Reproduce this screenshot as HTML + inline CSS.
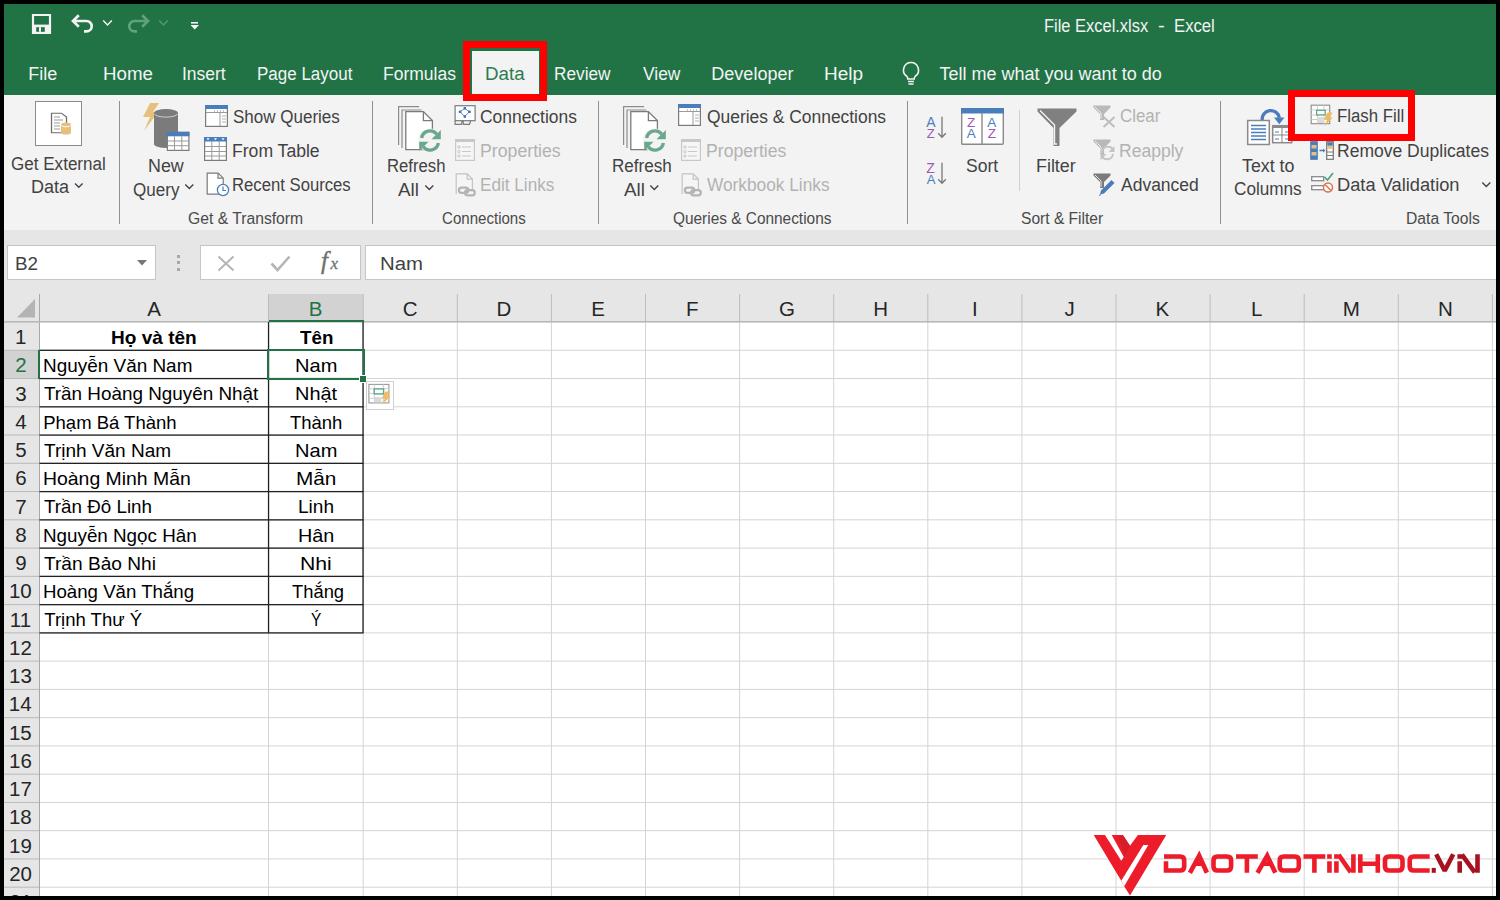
<!DOCTYPE html>
<html><head><meta charset="utf-8"><title>Excel</title>
<style>
html,body{margin:0;padding:0;}
body{width:1500px;height:900px;background:#000;position:relative;overflow:hidden;font-family:"Liberation Sans",sans-serif;}
.t{position:absolute;white-space:nowrap;transform-origin:0 0;}
.r{position:absolute;}
svg.r{overflow:visible;}
</style></head><body>
<div class="r" style="left:4px;top:4px;width:1492px;height:91px;background:#217346"></div>
<svg class="r" style="left:31px;top:13px" width="21" height="21" viewBox="0 0 21 21"><path d="M2 2h17v18H2z" fill="none" stroke="#f3f3f3" stroke-width="2.2"/><path d="M1 1.6h19" stroke="#f3f3f3" stroke-width="1.2"/><rect x="1" y="11.6" width="19" height="9.4" fill="#f3f3f3"/><rect x="5.2" y="14.2" width="8.6" height="4.6" fill="#217346"/><rect x="8" y="14.2" width="2" height="4.6" fill="#f3f3f3"/></svg>
<svg class="r" style="left:66px;top:10px" width="30" height="26" viewBox="0 0 30 26"><path d="M7.5 11H20.5a5.2 5.2 0 0 1 0 10.4H18" fill="none" stroke="#f3f3f3" stroke-width="2.7"/><path d="M12.8 5.3L7 11L12.8 16.7" fill="none" stroke="#f3f3f3" stroke-width="2.7"/></svg>
<svg class="r" style="left:102px;top:19px" width="11" height="8" viewBox="0 0 11 8"><path d="M1.2 1.5L5.5 6L9.8 1.5" fill="none" stroke="#f3f3f3" stroke-width="1.5"/></svg>
<svg class="r" style="left:122px;top:10px" width="30" height="26" viewBox="0 0 30 26"><path d="M28-0.5" fill="none"/><path d="M25.5 11H12.5a5.2 5.2 0 0 0 0 10.4H15" fill="none" stroke="#5fa27c" stroke-width="2.7"/><path d="M20.2 5.3L26 11L20.2 16.7" fill="none" stroke="#5fa27c" stroke-width="2.7"/></svg>
<svg class="r" style="left:158px;top:19px" width="11" height="8" viewBox="0 0 11 8"><path d="M1.2 1.5L5.5 6L9.8 1.5" fill="none" stroke="#4e9a70" stroke-width="1.5"/></svg>
<svg class="r" style="left:190px;top:21px" width="10" height="10" viewBox="0 0 10 10"><rect x="1" y="1" width="7" height="1.6" fill="#f3f3f3"/><path d="M0.5 4h8.5L4.75 8.5z" fill="#f3f3f3"/></svg>
<div class="t" style="left:1044.38px;top:17.00px;font-size:18px;line-height:18px;color:#f3f3f3;transform:scaleX(0.9136);">File Excel.xlsx</div>
<div class="t" style="left:1158.08px;top:17.00px;font-size:18px;line-height:18px;color:#f3f3f3;transform:scaleX(1.1338);">-</div>
<div class="t" style="left:1173.96px;top:17.00px;font-size:18px;line-height:18px;color:#f3f3f3;transform:scaleX(0.9275);">Excel</div>
<div class="r" style="left:471.5px;top:50.8px;width:67.7px;height:44.5px;background:#f3f3f3"></div>
<div class="t" style="left:28.16px;top:65.00px;font-size:18px;line-height:18px;color:#f3f3f3;">File</div>
<div class="t" style="left:102.50px;top:65.00px;font-size:18px;line-height:18px;color:#f3f3f3;transform:scaleX(1.0411);">Home</div>
<div class="t" style="left:182.43px;top:65.00px;font-size:18px;line-height:18px;color:#f3f3f3;transform:scaleX(0.9702);">Insert</div>
<div class="t" style="left:256.64px;top:65.00px;font-size:18px;line-height:18px;color:#f3f3f3;transform:scaleX(0.9443);">Page Layout</div>
<div class="t" style="left:382.60px;top:65.00px;font-size:18px;line-height:18px;color:#f3f3f3;transform:scaleX(0.9727);">Formulas</div>
<div class="t" style="left:554.12px;top:65.00px;font-size:18px;line-height:18px;color:#f3f3f3;transform:scaleX(0.9583);">Review</div>
<div class="t" style="left:642.61px;top:65.00px;font-size:18px;line-height:18px;color:#f3f3f3;transform:scaleX(0.9661);">View</div>
<div class="t" style="left:711.37px;top:65.00px;font-size:18px;line-height:18px;color:#f3f3f3;">Developer</div>
<div class="t" style="left:823.78px;top:65.00px;font-size:18px;line-height:18px;color:#f3f3f3;transform:scaleX(1.0537);">Help</div>
<div class="t" style="left:939.55px;top:65.00px;font-size:18px;line-height:18px;color:#f3f3f3;">Tell me what you want to do</div>
<div class="t" style="left:484.50px;top:65.00px;font-size:18px;line-height:18px;color:#2b7b50;transform:scaleX(1.0400);">Data</div>
<svg class="r" style="left:900px;top:61px" width="22" height="25" viewBox="0 0 22 25"><path d="M11 1.5a7.5 7.5 0 0 0-4.5 13.5c1 .9 1.3 1.8 1.3 3h6.4c0-1.2.3-2.1 1.3-3A7.5 7.5 0 0 0 11 1.5z" fill="none" stroke="#f3f3f3" stroke-width="1.6"/><path d="M8 20.5h6M8.5 23h5" stroke="#f3f3f3" stroke-width="1.5"/></svg>
<div class="r" style="left:4px;top:95px;width:1492px;height:135px;background:#f3f3f3"></div>
<div class="r" style="left:4px;top:229.6px;width:1492px;height:1.2px;background:#d2d2d2"></div>
<div class="r" style="left:119px;top:101px;width:1px;height:123px;background:#909090"></div>
<div class="r" style="left:372px;top:101px;width:1px;height:123px;background:#909090"></div>
<div class="r" style="left:598px;top:101px;width:1px;height:123px;background:#909090"></div>
<div class="r" style="left:906.5px;top:101px;width:1px;height:123px;background:#909090"></div>
<div class="r" style="left:1219.5px;top:101px;width:1px;height:123px;background:#909090"></div>
<div class="r" style="left:1019px;top:110px;width:1px;height:81px;background:#d0d0d0"></div>
<div class="t" style="left:188.02px;top:211.00px;font-size:16px;line-height:16px;color:#4a4a4a;transform:scaleX(0.9808);">Get & Transform</div>
<div class="t" style="left:442.25px;top:211.00px;font-size:16px;line-height:16px;color:#4a4a4a;transform:scaleX(0.9418);">Connections</div>
<div class="t" style="left:672.51px;top:211.00px;font-size:16px;line-height:16px;color:#4a4a4a;transform:scaleX(0.9628);">Queries & Connections</div>
<div class="t" style="left:1021.30px;top:211.00px;font-size:16px;line-height:16px;color:#4a4a4a;transform:scaleX(0.9732);">Sort & Filter</div>
<div class="t" style="left:1406.45px;top:211.00px;font-size:16px;line-height:16px;color:#4a4a4a;transform:scaleX(0.9790);">Data Tools</div>
<div class="r" style="left:35px;top:101px;width:47px;height:45px;background:#fff;border:1px solid #8a8a8a;box-sizing:border-box"></div>
<svg class="r" style="left:50px;top:112px" width="22" height="24" viewBox="0 0 22 24"><path d="M1.5 1.5h10l5 5v20h-15z" fill="#fff" stroke="#6e6e6e" stroke-width="1.3" transform="translate(0,0) scale(1,0.78)"/><path d="M4 5h6M4 8h9M4 11h6M4 14h6M4 17h6" stroke="#bdbdbd" stroke-width="1.3"/><path d="M11 12.5a5 2 0 0 1 10 0v8a5 2 0 0 1-10 0z" fill="#e8c07e"/><path d="M11.3 13.2a4.7 1.6 0 0 0 9.4 0" stroke="#fff" stroke-width="0.9" fill="none"/></svg>
<div class="t" style="left:11.15px;top:155.00px;font-size:18px;line-height:18px;color:#424242;transform:scaleX(0.9477);">Get External</div>
<div class="t" style="left:31.06px;top:178.00px;font-size:18px;line-height:18px;color:#424242;">Data</div>
<svg class="r" style="left:74px;top:182.3px" width="10" height="7" viewBox="0 0 10 7"><path d="M1 1.5L4.8 5.3L8.6 1.5" fill="none" stroke="#444" stroke-width="1.4"/></svg>
<svg class="r" style="left:141px;top:102px" width="50" height="50" viewBox="0 0 50 50"><path d="M9 1h9l-6 9h5L3 29l6-14H2z" fill="#e8c07e"/><path d="M13 11a12 4 0 0 1 24 0v31a12 4 0 0 1-24 0z" fill="#7b7b7b"/><path d="M13.6 11.8a11.4 3.3 0 0 0 22.8 0" stroke="#d0d0d0" stroke-width="1" fill="none"/><rect x="26.4" y="30.4" width="21.5" height="18" fill="#fff" stroke="#7b7b7b" stroke-width="1.2"/><rect x="25.8" y="29.8" width="22.7" height="4.5" fill="#4a7ebb"/><path d="M33.5 34.3v14M40.8 34.3v14M26.4 39h21.5M26.4 43.7h21.5" stroke="#9a9a9a" stroke-width="1"/></svg>
<div class="t" style="left:147.57px;top:157.00px;font-size:18px;line-height:18px;color:#424242;transform:scaleX(0.9928);">New</div>
<div class="t" style="left:133.23px;top:181.00px;font-size:18px;line-height:18px;color:#424242;transform:scaleX(0.9470);">Query</div>
<svg class="r" style="left:184px;top:183px" width="11" height="8" viewBox="0 0 11 8"><path d="M1.3 1.5L5.3 5.5L9.3 1.5" fill="none" stroke="#444" stroke-width="1.4"/></svg>
<svg class="r" style="left:204.5px;top:104.8px" width="23" height="22" viewBox="0 0 23 22"><rect x="0.6" y="0.6" width="21.8" height="20.8" fill="#fff" stroke="#7b7b7b" stroke-width="1.2"/><rect x="0" y="0" width="23" height="4" fill="#4a7ebb"/><path d="M1 7.5h21" stroke="#9a9a9a" stroke-width="1"/><path d="M15 8v13" stroke="#9a9a9a"/><path d="M17 11h4M17 14h4M17 17h4" stroke="#b0b0b0"/><path d="M9 6h1M12 6h1M15 6h1M18 6h1" stroke="#888"/></svg>
<svg class="r" style="left:204px;top:137px" width="23" height="24" viewBox="0 0 23 24"><rect x="0.6" y="0.6" width="21.8" height="22.8" fill="#fff" stroke="#7b7b7b" stroke-width="1.2"/><rect x="0" y="0" width="23" height="4.5" fill="#4a7ebb"/><path d="M7.8 4v19M15.2 4v19M1 9.5h21M1 14.5h21M1 19h21" stroke="#9a9a9a" stroke-width="1"/><path d="M2.5 1.3h3l-1.5 2zM10 1.3h3l-1.5 2zM17.5 1.3h3l-1.5 2z" fill="#fff"/></svg>
<svg class="r" style="left:206px;top:172px" width="24" height="25" viewBox="0 0 24 25"><path d="M1.2 1.2h11l5 5v16h-16z" fill="#fff" stroke="#7b7b7b" stroke-width="1.2"/><path d="M12 1.2v5h5" fill="none" stroke="#7b7b7b" stroke-width="1.2"/><circle cx="17" cy="18" r="5.6" fill="#fff" stroke="#4a7ebb" stroke-width="1.3"/><path d="M17 14.5v4h3" fill="none" stroke="#4a7ebb" stroke-width="1.2"/></svg>
<div class="t" style="left:232.54px;top:108.00px;font-size:18px;line-height:18px;color:#424242;transform:scaleX(0.9444);">Show Queries</div>
<div class="t" style="left:231.89px;top:142.00px;font-size:18px;line-height:18px;color:#424242;transform:scaleX(0.9772);">From Table</div>
<div class="t" style="left:231.97px;top:176.00px;font-size:18px;line-height:18px;color:#424242;transform:scaleX(0.9270);">Recent Sources</div>
<svg class="r" style="left:397px;top:104px" width="47" height="48" viewBox="0 0 47 48"><path d="M1.6 41V2.6h20.5M5 44V6h19.5" fill="none" stroke="#8c8c8c" stroke-width="1.2"/><path d="M8.8 7.6h17.6l9 9v29h-26.6z" fill="#fff" stroke="#7b7b7b" stroke-width="1.3"/><path d="M26.4 7.6v9h9" fill="none" stroke="#7b7b7b" stroke-width="1.3"/><circle cx="33" cy="36.5" r="12" fill="#f3f3f3"/><path d="M24.6 34a8.6 8.6 0 0 1 15.2-3.8" fill="none" stroke="#6aa88e" stroke-width="3.4"/><path d="M43.8 26v9.3h-9.3z" fill="#6aa88e"/><path d="M41.4 39a8.6 8.6 0 0 1-15.2 3.8" fill="none" stroke="#6aa88e" stroke-width="3.4"/><path d="M22.2 47v-9.3h9.3z" fill="#6aa88e"/></svg>
<div class="t" style="left:386.86px;top:157.00px;font-size:18px;line-height:18px;color:#424242;transform:scaleX(0.9273);">Refresh</div>
<div class="t" style="left:398.31px;top:181.00px;font-size:18px;line-height:18px;color:#424242;transform:scaleX(1.0470);">All</div>
<svg class="r" style="left:424px;top:184px" width="11" height="8" viewBox="0 0 11 8"><path d="M1.3 1.5L5.3 5.5L9.3 1.5" fill="none" stroke="#444" stroke-width="1.4"/></svg>
<svg class="r" style="left:622px;top:104px" width="47" height="48" viewBox="0 0 47 48"><path d="M1.6 41V2.6h20.5M5 44V6h19.5" fill="none" stroke="#8c8c8c" stroke-width="1.2"/><path d="M8.8 7.6h17.6l9 9v29h-26.6z" fill="#fff" stroke="#7b7b7b" stroke-width="1.3"/><path d="M26.4 7.6v9h9" fill="none" stroke="#7b7b7b" stroke-width="1.3"/><circle cx="33" cy="36.5" r="12" fill="#f3f3f3"/><path d="M24.6 34a8.6 8.6 0 0 1 15.2-3.8" fill="none" stroke="#6aa88e" stroke-width="3.4"/><path d="M43.8 26v9.3h-9.3z" fill="#6aa88e"/><path d="M41.4 39a8.6 8.6 0 0 1-15.2 3.8" fill="none" stroke="#6aa88e" stroke-width="3.4"/><path d="M22.2 47v-9.3h9.3z" fill="#6aa88e"/></svg>
<div class="t" style="left:611.63px;top:157.00px;font-size:18px;line-height:18px;color:#424242;transform:scaleX(0.9488);">Refresh</div>
<div class="t" style="left:623.61px;top:181.00px;font-size:18px;line-height:18px;color:#424242;transform:scaleX(1.0470);">All</div>
<svg class="r" style="left:649px;top:184px" width="11" height="8" viewBox="0 0 11 8"><path d="M1.3 1.5L5.3 5.5L9.3 1.5" fill="none" stroke="#444" stroke-width="1.4"/></svg>
<svg class="r" style="left:454px;top:104px" width="22" height="22" viewBox="0 0 22 22"><rect x="1.1" y="1.7" width="20" height="15" fill="#fff" stroke="#7b7b7b" stroke-width="1.2"/><path d="M1.1 16.7v3.6h6.2l1-3.6M9.2 16.7v3.6h6.3l1.2-3.6" fill="none" stroke="#7b7b7b" stroke-width="1.2"/><path d="M10.8 4.3L15.3 7.8L10.8 12.5L6 7.8z" fill="none" stroke="#4a7ebb" stroke-width="0.9"/><circle cx="10.8" cy="8" r="1.6" fill="#fff"/><rect x="9.6" y="3" width="2.4" height="2.6" fill="#3f73b4"/><rect x="4.8" y="6.6" width="2.6" height="2.4" fill="#3f73b4"/><rect x="14.1" y="6.6" width="2.6" height="2.4" fill="#3f73b4"/><rect x="9.6" y="11.2" width="2.4" height="2.6" fill="#3f73b4"/></svg>
<svg class="r" style="left:455px;top:139px" width="20" height="22" viewBox="0 0 20 22"><rect x="0.6" y="0.6" width="18.8" height="20.8" fill="#f6f6f6" stroke="#c8c8c8" stroke-width="1.2"/><rect x="0" y="0" width="20" height="3" fill="#c8c8c8"/><path d="M7 8h9M7 12.5h9M7 17h9" stroke="#c8c8c8" stroke-width="1.2"/><circle cx="4" cy="8" r="1.2" fill="none" stroke="#c8c8c8"/><circle cx="4" cy="12.5" r="1.2" fill="none" stroke="#c8c8c8"/><circle cx="4" cy="17" r="1.2" fill="none" stroke="#c8c8c8"/></svg>
<svg class="r" style="left:455px;top:173px" width="23" height="24" viewBox="0 0 23 24"><path d="M1.2 21V0.9h11l5.2 5.2V17" fill="#f6f4f6" stroke="#c4c4c4" stroke-width="1.2"/><path d="M12.2 0.9v5.2h5.2" fill="none" stroke="#c4c4c4" stroke-width="1.2"/><path d="M6.5 14.6h4.2a2.6 2.6 0 0 1 0 5.2H6.5a2.6 2.6 0 0 1 0-5.2zM12.6 17.2h4.6a2.6 2.6 0 0 1 0 5.2h-4.6a2.6 2.6 0 0 1 0-5.2z" fill="none" stroke="#b4b4b4" stroke-width="2.2"/></svg>
<div class="t" style="left:480.43px;top:108.00px;font-size:18px;line-height:18px;color:#424242;transform:scaleX(0.9680);">Connections</div>
<div class="t" style="left:479.88px;top:142.00px;font-size:18px;line-height:18px;color:#b2b2b2;transform:scaleX(0.9836);">Properties</div>
<div class="t" style="left:479.93px;top:176.00px;font-size:18px;line-height:18px;color:#b2b2b2;transform:scaleX(0.9531);">Edit Links</div>
<svg class="r" style="left:678px;top:104px" width="23" height="22" viewBox="0 0 23 22"><rect x="0.6" y="0.6" width="21.8" height="20.8" fill="#fff" stroke="#7b7b7b" stroke-width="1.2"/><rect x="0" y="0" width="23" height="4" fill="#4a7ebb"/><path d="M1 7.5h21" stroke="#9a9a9a" stroke-width="1"/><path d="M15 8v13" stroke="#9a9a9a"/><path d="M17 11h4M17 14h4M17 17h4" stroke="#b0b0b0"/><path d="M9 6h1M12 6h1M15 6h1M18 6h1" stroke="#888"/></svg>
<svg class="r" style="left:681px;top:139px" width="20" height="22" viewBox="0 0 20 22"><rect x="0.6" y="0.6" width="18.8" height="20.8" fill="#f6f6f6" stroke="#c8c8c8" stroke-width="1.2"/><rect x="0" y="0" width="20" height="3" fill="#c8c8c8"/><path d="M7 8h9M7 12.5h9M7 17h9" stroke="#c8c8c8" stroke-width="1.2"/><circle cx="4" cy="8" r="1.2" fill="none" stroke="#c8c8c8"/><circle cx="4" cy="12.5" r="1.2" fill="none" stroke="#c8c8c8"/><circle cx="4" cy="17" r="1.2" fill="none" stroke="#c8c8c8"/></svg>
<svg class="r" style="left:681px;top:173px" width="23" height="24" viewBox="0 0 23 24"><path d="M1.2 21V0.9h11l5.2 5.2V17" fill="#f6f4f6" stroke="#c4c4c4" stroke-width="1.2"/><path d="M12.2 0.9v5.2h5.2" fill="none" stroke="#c4c4c4" stroke-width="1.2"/><path d="M6.5 14.6h4.2a2.6 2.6 0 0 1 0 5.2H6.5a2.6 2.6 0 0 1 0-5.2zM12.6 17.2h4.6a2.6 2.6 0 0 1 0 5.2h-4.6a2.6 2.6 0 0 1 0-5.2z" fill="none" stroke="#b4b4b4" stroke-width="2.2"/></svg>
<div class="t" style="left:706.72px;top:108.00px;font-size:18px;line-height:18px;color:#424242;transform:scaleX(0.9674);">Queries &amp; Connections</div>
<div class="t" style="left:706.09px;top:142.00px;font-size:18px;line-height:18px;color:#b2b2b2;transform:scaleX(0.9799);">Properties</div>
<div class="t" style="left:707.41px;top:176.00px;font-size:18px;line-height:18px;color:#b2b2b2;transform:scaleX(0.9599);">Workbook Links</div>
<svg class="r" style="left:926px;top:116px" width="22" height="23" viewBox="0 0 22 23"><text x="0.3" y="11" font-family="Liberation Sans" font-size="14" fill="#4a7ebb">A</text><text x="0.8" y="21.8" font-family="Liberation Sans" font-size="13" fill="#9b59b6">Z</text><path d="M16 0.7v20.5M12.2 17.2l3.8 4 3.8-4" fill="none" stroke="#777" stroke-width="1.3"/></svg>
<svg class="r" style="left:926px;top:162px" width="22" height="23" viewBox="0 0 22 23"><text x="0.3" y="11" font-family="Liberation Sans" font-size="14" fill="#9b59b6">Z</text><text x="0.8" y="21.8" font-family="Liberation Sans" font-size="13" fill="#4a7ebb">A</text><path d="M16 0.7v20.5M12.2 17.2l3.8 4 3.8-4" fill="none" stroke="#777" stroke-width="1.3"/></svg>
<svg class="r" style="left:961px;top:108px" width="43" height="37" viewBox="0 0 43 37"><rect x="0.7" y="0.7" width="41.6" height="35.6" rx="1" fill="#fff" stroke="#8a8a8a" stroke-width="1.4"/><rect x="0" y="0" width="43" height="5.5" fill="#4a7ebb"/><path d="M21 5v31" stroke="#8a8a8a" stroke-width="1.4"/><text x="6" y="19" font-family="Liberation Sans" font-size="13.5" fill="#9b59b6">Z</text><text x="5.8" y="29.8" font-family="Liberation Sans" font-size="13.5" fill="#4a7ebb">A</text><text x="26.3" y="19" font-family="Liberation Sans" font-size="13.5" fill="#4a7ebb">A</text><text x="26.8" y="29.8" font-family="Liberation Sans" font-size="13.5" fill="#9b59b6">Z</text></svg>
<div class="t" style="left:965.81px;top:157.00px;font-size:18px;line-height:18px;color:#424242;transform:scaleX(0.9738);">Sort</div>
<svg class="r" style="left:1037px;top:108px" width="40" height="39" viewBox="0 0 40 39"><path d="M0.5 0.5h39v3L22.5 20v18h-6V20L0.5 3.5z" fill="#808080"/><path d="M3 2.5L17.5 17v19h2.5" fill="none" stroke="#f3f3f3" stroke-width="1.4"/></svg>
<div class="t" style="left:1035.97px;top:157.00px;font-size:18px;line-height:18px;color:#424242;transform:scaleX(0.9935);">Filter</div>
<svg class="r" style="left:1092.5px;top:105px" width="18" height="15" viewBox="0 0 18 15"><path d="M0.5 0.5h17v2L11 9v6H7V9L0.5 2.5z" fill="#b9b9b9"/><path d="M2 2l6 6v6" fill="none" stroke="#f3f3f3" stroke-width="0.9"/></svg>
<svg class="r" style="left:1102px;top:116px" width="14" height="12" viewBox="0 0 14 12"><path d="M1.5 1l11 10M12.5 1l-11 10" stroke="#bdbdbd" stroke-width="2"/></svg>
<svg class="r" style="left:1092.5px;top:139px" width="18" height="15" viewBox="0 0 18 15"><path d="M0.5 0.5h17v2L11 9v6H7V9L0.5 2.5z" fill="#b9b9b9"/><path d="M2 2l6 6v6" fill="none" stroke="#f3f3f3" stroke-width="0.9"/></svg>
<svg class="r" style="left:1099px;top:144px" width="17" height="18" viewBox="0 0 17 18"><path d="M3 8a6 6 0 0 1 11-2.5" fill="none" stroke="#c4c4c4" stroke-width="2"/><path d="M15.5 2v6h-6z" fill="#c4c4c4"/><path d="M14 10a6 6 0 0 1-11 2.5" fill="none" stroke="#c4c4c4" stroke-width="2"/><path d="M1.5 16v-6h6z" fill="#c4c4c4"/></svg>
<svg class="r" style="left:1092.5px;top:173px" width="18" height="15" viewBox="0 0 18 15"><path d="M0.5 0.5h17v2L11 9v6H7V9L0.5 2.5z" fill="#7b7b7b"/><path d="M2 2l6 6v6" fill="none" stroke="#f3f3f3" stroke-width="0.9"/></svg>
<svg class="r" style="left:1098px;top:179px" width="18" height="17" viewBox="0 0 18 17"><path d="M2 15.5l1-4L13.5 1l3 3L6 14.5z" fill="#4a7ebb"/><path d="M1 16.5l2-1" stroke="#4a7ebb"/></svg>
<div class="t" style="left:1119.86px;top:107.00px;font-size:18px;line-height:18px;color:#b2b2b2;transform:scaleX(0.9363);">Clear</div>
<div class="t" style="left:1119.30px;top:142.00px;font-size:18px;line-height:18px;color:#b2b2b2;transform:scaleX(0.9747);">Reapply</div>
<div class="t" style="left:1120.61px;top:176.00px;font-size:18px;line-height:18px;color:#424242;transform:scaleX(0.9714);">Advanced</div>
<svg class="r" style="left:1246px;top:107px" width="46" height="39" viewBox="0 0 46 39"><path d="M16.3 13.5A8.6 8.6 0 0 1 33.3 10.8" fill="none" stroke="#4a7ebb" stroke-width="3.3"/><path d="M28 10.5h10.5l-5.2 6.8z" fill="#4a7ebb"/><rect x="1.7" y="13.5" width="21.6" height="24" fill="#fff" stroke="#8a8a8a" stroke-width="1.5"/><path d="M5 18.5h15M5 22h15M5 25.5h15M5 29h15M5 32.5h15" stroke="#4a7ebb" stroke-width="1.3"/><rect x="26.7" y="18.7" width="19" height="17" fill="#fff" stroke="#8a8a8a" stroke-width="1.5"/><rect x="26" y="18" width="20" height="3" fill="#8a8a8a"/><path d="M36 21v15M26 28h20" stroke="#8a8a8a" stroke-width="1.1"/><path d="M29 25h4M39 25h4M29 32h4M39 32h4" stroke="#4a7ebb" stroke-width="1.2"/></svg>
<div class="t" style="left:1241.95px;top:157.00px;font-size:18px;line-height:18px;color:#424242;transform:scaleX(0.9896);">Text to</div>
<div class="t" style="left:1234.14px;top:180.00px;font-size:18px;line-height:18px;color:#424242;transform:scaleX(0.9528);">Columns</div>
<svg class="r" style="left:1310px;top:104px" width="25" height="23" viewBox="0 0 25 23"><rect x="1.2" y="1.2" width="18.5" height="18.5" fill="#fff" stroke="#8a8a8a" stroke-width="1.1"/><path d="M1.2 6h18.5M1.2 11h18.5M1.2 15.5h18.5M7.5 1.2v18.5M14 1.2v18.5" stroke="#c8c8c8" stroke-width="0.9"/><rect x="6.6" y="6.3" width="8.6" height="4.6" fill="#fff" stroke="#5fa98a" stroke-width="1.3"/><rect x="7.5" y="13" width="6.5" height="6" fill="#dcdcdc"/><path d="M17.5 8.6h5.2l-3.2 4.8h3.4l-8.6 8.8 2.8-6.6h-3.2z" fill="#f0bb5e"/></svg>
<svg class="r" style="left:1310px;top:141px" width="24" height="19" viewBox="0 0 24 19"><rect x="0.7" y="0.7" width="6.6" height="17.6" fill="#4a7ebb" stroke="#4a7ebb"/><rect x="1.5" y="4" width="5" height="3.5" fill="#e8c07e"/><rect x="1.5" y="11" width="5" height="3.5" fill="#e8c07e"/><path d="M9.5 9.5h4" stroke="#4a7ebb" stroke-width="1.5"/><path d="M13 7.5l2.5 2-2.5 2z" fill="#4a7ebb"/><rect x="16.7" y="0.7" width="6.6" height="17.6" fill="#fff" stroke="#7b7b7b" stroke-width="1.3"/><rect x="17.3" y="1.3" width="5.4" height="3.5" fill="#4a7ebb"/><rect x="17.3" y="4.8" width="5.4" height="3" fill="#e8c07e"/><path d="M17 11h6M17 14.5h6" stroke="#7b7b7b" stroke-width="1"/></svg>
<svg class="r" style="left:1311px;top:172px" width="23" height="21" viewBox="0 0 23 21"><rect x="0.7" y="4.7" width="12" height="4" fill="#fff" stroke="#8a8a8a" stroke-width="1.3"/><rect x="0.7" y="13.7" width="12" height="4" fill="#fff" stroke="#8a8a8a" stroke-width="1.3"/><path d="M13.5 5l3 3 5.5-7" fill="none" stroke="#4aa07a" stroke-width="1.6"/><circle cx="17" cy="15.5" r="4.5" fill="#fff" stroke="#e07050" stroke-width="1.5"/><path d="M14 12.5l6 6" stroke="#e07050" stroke-width="1.4"/></svg>
<div class="t" style="left:1337.36px;top:107.00px;font-size:18px;line-height:18px;color:#424242;transform:scaleX(0.9339);">Flash Fill</div>
<div class="t" style="left:1337.30px;top:142.00px;font-size:18px;line-height:18px;color:#424242;transform:scaleX(0.9734);">Remove Duplicates</div>
<div class="t" style="left:1337.24px;top:176.00px;font-size:18px;line-height:18px;color:#424242;transform:scaleX(1.0146);">Data Validation</div>
<svg class="r" style="left:1481px;top:181px" width="11" height="8" viewBox="0 0 11 8"><path d="M1.3 1.5L5.3 5.5L9.3 1.5" fill="none" stroke="#444" stroke-width="1.4"/></svg>
<div class="r" style="left:463px;top:40.8px;width:84px;height:60.5px;border:7px solid #ff0000;box-sizing:border-box"></div>
<div class="r" style="left:1288.3px;top:90px;width:126.7px;height:50.8px;border:7px solid #ff0000;box-sizing:border-box"></div>
<div class="r" style="left:4px;top:230px;width:1492px;height:64px;background:#e6e6e6"></div>
<div class="r" style="left:7px;top:245px;width:149px;height:35px;background:#fff;border:1px solid #c6c6c6;box-sizing:border-box"></div>
<div class="t" style="left:14.50px;top:255.00px;font-size:18px;line-height:18px;color:#424242;transform:scaleX(1.0449);">B2</div>
<svg class="r" style="left:137px;top:260px" width="10" height="6" viewBox="0 0 10 6"><path d="M0 0h10L5 5.5z" fill="#777"/></svg>
<div class="r" style="left:176.5px;top:254.5px;width:3.5px;height:3px;background:#a8a8a8"></div>
<div class="r" style="left:176.5px;top:261px;width:3.5px;height:3px;background:#a8a8a8"></div>
<div class="r" style="left:176.5px;top:267.5px;width:3.5px;height:3px;background:#a8a8a8"></div>
<div class="r" style="left:200px;top:245px;width:161px;height:35px;background:#fff;border:1px solid #c6c6c6;box-sizing:border-box"></div>
<svg class="r" style="left:217px;top:255px" width="19" height="17" viewBox="0 0 19 17"><path d="M1.5 1.5l15 14M16.5 1.5l-15 14" stroke="#b5b5b5" stroke-width="2"/></svg>
<svg class="r" style="left:270px;top:255px" width="21" height="17" viewBox="0 0 21 17"><path d="M1.5 8.5l6 6.5L19.5 1.5" fill="none" stroke="#b5b5b5" stroke-width="2.6"/></svg>
<svg class="r" style="left:320px;top:249px" width="24" height="27" viewBox="0 0 24 27"><text x="1" y="20" font-family="Liberation Serif" font-style="italic" font-size="25" fill="#707070" stroke="#707070" stroke-width="0.4">f</text><text x="10.5" y="20" font-family="Liberation Serif" font-style="italic" font-size="17" fill="#707070" stroke="#707070" stroke-width="0.3">x</text></svg>
<div class="r" style="left:365px;top:245px;width:1131px;height:35px;background:#fff;border:1px solid #c6c6c6;border-right:none;box-sizing:border-box"></div>
<div class="t" style="left:380.37px;top:255.00px;font-size:18px;line-height:18px;color:#424242;transform:scaleX(1.1309);">Nam</div>
<div class="r" style="left:4px;top:294px;width:1492px;height:28px;background:#e6e6e6"></div>
<div class="r" style="left:4px;top:322px;width:36px;height:574px;background:#e6e6e6"></div>
<div class="r" style="left:40px;top:322px;width:1456px;height:574px;background:#fff"></div>
<svg class="r" style="left:17px;top:299.3px" width="18" height="18.5" viewBox="0 0 18 18.5"><path d="M18 0v18.5H0z" fill="#b4b4b4"/></svg>
<div class="r" style="left:268.5px;top:294px;width:94.5px;height:28px;background:#d2d2d2"></div>
<div class="r" style="left:4px;top:350.3px;width:36px;height:28.26px;background:#d2d2d2"></div>
<svg class="r" style="left:0px;top:0px" width="1500" height="900" viewBox="0 0 1500 900"><rect x="40" y="349.76" width="1456" height="1" fill="#d4d4d4"/><rect x="4" y="349.76" width="36" height="1" fill="#bababa"/><rect x="40" y="378.02" width="1456" height="1" fill="#d4d4d4"/><rect x="4" y="378.02" width="36" height="1" fill="#bababa"/><rect x="40" y="406.28" width="1456" height="1" fill="#d4d4d4"/><rect x="4" y="406.28" width="36" height="1" fill="#bababa"/><rect x="40" y="434.54" width="1456" height="1" fill="#d4d4d4"/><rect x="4" y="434.54" width="36" height="1" fill="#bababa"/><rect x="40" y="462.80" width="1456" height="1" fill="#d4d4d4"/><rect x="4" y="462.80" width="36" height="1" fill="#bababa"/><rect x="40" y="491.06" width="1456" height="1" fill="#d4d4d4"/><rect x="4" y="491.06" width="36" height="1" fill="#bababa"/><rect x="40" y="519.32" width="1456" height="1" fill="#d4d4d4"/><rect x="4" y="519.32" width="36" height="1" fill="#bababa"/><rect x="40" y="547.58" width="1456" height="1" fill="#d4d4d4"/><rect x="4" y="547.58" width="36" height="1" fill="#bababa"/><rect x="40" y="575.84" width="1456" height="1" fill="#d4d4d4"/><rect x="4" y="575.84" width="36" height="1" fill="#bababa"/><rect x="40" y="604.10" width="1456" height="1" fill="#d4d4d4"/><rect x="4" y="604.10" width="36" height="1" fill="#bababa"/><rect x="40" y="632.36" width="1456" height="1" fill="#d4d4d4"/><rect x="4" y="632.36" width="36" height="1" fill="#bababa"/><rect x="40" y="660.62" width="1456" height="1" fill="#d4d4d4"/><rect x="4" y="660.62" width="36" height="1" fill="#bababa"/><rect x="40" y="688.88" width="1456" height="1" fill="#d4d4d4"/><rect x="4" y="688.88" width="36" height="1" fill="#bababa"/><rect x="40" y="717.14" width="1456" height="1" fill="#d4d4d4"/><rect x="4" y="717.14" width="36" height="1" fill="#bababa"/><rect x="40" y="745.40" width="1456" height="1" fill="#d4d4d4"/><rect x="4" y="745.40" width="36" height="1" fill="#bababa"/><rect x="40" y="773.66" width="1456" height="1" fill="#d4d4d4"/><rect x="4" y="773.66" width="36" height="1" fill="#bababa"/><rect x="40" y="801.92" width="1456" height="1" fill="#d4d4d4"/><rect x="4" y="801.92" width="36" height="1" fill="#bababa"/><rect x="40" y="830.18" width="1456" height="1" fill="#d4d4d4"/><rect x="4" y="830.18" width="36" height="1" fill="#bababa"/><rect x="40" y="858.44" width="1456" height="1" fill="#d4d4d4"/><rect x="4" y="858.44" width="36" height="1" fill="#bababa"/><rect x="40" y="886.70" width="1456" height="1" fill="#d4d4d4"/><rect x="4" y="886.70" width="36" height="1" fill="#bababa"/><rect x="268.00" y="322" width="1" height="574" fill="#d4d4d4"/><rect x="268.00" y="294" width="1" height="28" fill="#bdbdbd"/><rect x="362.70" y="322" width="1" height="574" fill="#d4d4d4"/><rect x="362.70" y="294" width="1" height="28" fill="#bdbdbd"/><rect x="456.80" y="322" width="1" height="574" fill="#d4d4d4"/><rect x="456.80" y="294" width="1" height="28" fill="#bdbdbd"/><rect x="550.90" y="322" width="1" height="574" fill="#d4d4d4"/><rect x="550.90" y="294" width="1" height="28" fill="#bdbdbd"/><rect x="645.00" y="322" width="1" height="574" fill="#d4d4d4"/><rect x="645.00" y="294" width="1" height="28" fill="#bdbdbd"/><rect x="739.10" y="322" width="1" height="574" fill="#d4d4d4"/><rect x="739.10" y="294" width="1" height="28" fill="#bdbdbd"/><rect x="833.20" y="322" width="1" height="574" fill="#d4d4d4"/><rect x="833.20" y="294" width="1" height="28" fill="#bdbdbd"/><rect x="927.30" y="322" width="1" height="574" fill="#d4d4d4"/><rect x="927.30" y="294" width="1" height="28" fill="#bdbdbd"/><rect x="1021.40" y="322" width="1" height="574" fill="#d4d4d4"/><rect x="1021.40" y="294" width="1" height="28" fill="#bdbdbd"/><rect x="1115.50" y="322" width="1" height="574" fill="#d4d4d4"/><rect x="1115.50" y="294" width="1" height="28" fill="#bdbdbd"/><rect x="1209.60" y="322" width="1" height="574" fill="#d4d4d4"/><rect x="1209.60" y="294" width="1" height="28" fill="#bdbdbd"/><rect x="1303.70" y="322" width="1" height="574" fill="#d4d4d4"/><rect x="1303.70" y="294" width="1" height="28" fill="#bdbdbd"/><rect x="1397.80" y="322" width="1" height="574" fill="#d4d4d4"/><rect x="1397.80" y="294" width="1" height="28" fill="#bdbdbd"/><rect x="1491.90" y="322" width="1" height="574" fill="#d4d4d4"/><rect x="1491.90" y="294" width="1" height="28" fill="#bdbdbd"/><rect x="39" y="294" width="1" height="602" fill="#a8a8a8"/><rect x="4" y="321" width="1492" height="1.6" fill="#b8b8b8"/><rect x="39.5" y="349.66" width="324" height="1.3" fill="#222"/><rect x="39.5" y="377.92" width="324" height="1.3" fill="#222"/><rect x="39.5" y="406.18" width="324" height="1.3" fill="#222"/><rect x="39.5" y="434.44" width="324" height="1.3" fill="#222"/><rect x="39.5" y="462.70" width="324" height="1.3" fill="#222"/><rect x="39.5" y="490.96" width="324" height="1.3" fill="#222"/><rect x="39.5" y="519.22" width="324" height="1.3" fill="#222"/><rect x="39.5" y="547.48" width="324" height="1.3" fill="#222"/><rect x="39.5" y="575.74" width="324" height="1.3" fill="#222"/><rect x="39.5" y="604.00" width="324" height="1.3" fill="#222"/><rect x="39.5" y="632.26" width="324" height="1.3" fill="#222"/><rect x="267.90" y="322" width="1.3" height="310.86" fill="#222"/><rect x="362.40" y="322" width="1.3" height="310.86" fill="#222"/></svg>
<div class="r" style="left:268.5px;top:320.3px;width:95px;height:2px;background:#217346"></div>
<div class="r" style="left:37.5px;top:350.26px;width:2px;height:28.26px;background:#217346"></div>
<div class="r" style="left:267.3px;top:348.5px;width:97.5px;height:31.8px;border:2px solid #217346;box-sizing:border-box"></div>
<div class="r" style="left:359.7px;top:376px;width:6px;height:6px;background:#217346;border:1px solid #fff;box-sizing:content-box;margin:-1px"></div>
<div class="t" style="left:147.13px;top:299.00px;font-size:20.5px;line-height:20.5px;color:#262626;">A</div>
<div class="t" style="left:308.73px;top:299.00px;font-size:20.5px;line-height:20.5px;color:#217346;">B</div>
<div class="t" style="left:402.77px;top:299.00px;font-size:20.5px;line-height:20.5px;color:#262626;">C</div>
<div class="t" style="left:496.61px;top:299.00px;font-size:20.5px;line-height:20.5px;color:#262626;">D</div>
<div class="t" style="left:591.22px;top:299.00px;font-size:20.5px;line-height:20.5px;color:#262626;">E</div>
<div class="t" style="left:685.89px;top:299.00px;font-size:20.5px;line-height:20.5px;color:#262626;">F</div>
<div class="t" style="left:778.91px;top:299.00px;font-size:20.5px;line-height:20.5px;color:#262626;">G</div>
<div class="t" style="left:873.37px;top:299.00px;font-size:20.5px;line-height:20.5px;color:#262626;">H</div>
<div class="t" style="left:972.03px;top:299.00px;font-size:20.5px;line-height:20.5px;color:#262626;">I</div>
<div class="t" style="left:1064.44px;top:299.00px;font-size:20.5px;line-height:20.5px;color:#262626;">J</div>
<div class="t" style="left:1155.52px;top:299.00px;font-size:20.5px;line-height:20.5px;color:#262626;">K</div>
<div class="t" style="left:1250.95px;top:299.00px;font-size:20.5px;line-height:20.5px;color:#262626;">L</div>
<div class="t" style="left:1342.74px;top:299.00px;font-size:20.5px;line-height:20.5px;color:#262626;">M</div>
<div class="t" style="left:1437.97px;top:299.00px;font-size:20.5px;line-height:20.5px;color:#262626;">N</div>
<div class="t" style="left:15.06px;top:327.00px;font-size:20.5px;line-height:20.5px;color:#262626;">1</div>
<div class="t" style="left:15.31px;top:355.00px;font-size:20.5px;line-height:20.5px;color:#217346;">2</div>
<div class="t" style="left:15.36px;top:384.00px;font-size:20.5px;line-height:20.5px;color:#262626;">3</div>
<div class="t" style="left:15.36px;top:412.00px;font-size:20.5px;line-height:20.5px;color:#262626;">4</div>
<div class="t" style="left:15.31px;top:440.00px;font-size:20.5px;line-height:20.5px;color:#262626;">5</div>
<div class="t" style="left:15.26px;top:468.00px;font-size:20.5px;line-height:20.5px;color:#262626;">6</div>
<div class="t" style="left:15.31px;top:497.00px;font-size:20.5px;line-height:20.5px;color:#262626;">7</div>
<div class="t" style="left:15.26px;top:525.00px;font-size:20.5px;line-height:20.5px;color:#262626;">8</div>
<div class="t" style="left:15.31px;top:553.00px;font-size:20.5px;line-height:20.5px;color:#262626;">9</div>
<div class="t" style="left:8.96px;top:581.00px;font-size:20.5px;line-height:20.5px;color:#262626;">10</div>
<div class="t" style="left:9.83px;top:610.00px;font-size:20.5px;line-height:20.5px;color:#262626;">11</div>
<div class="t" style="left:9.07px;top:638.00px;font-size:20.5px;line-height:20.5px;color:#262626;">12</div>
<div class="t" style="left:9.02px;top:666.00px;font-size:20.5px;line-height:20.5px;color:#262626;">13</div>
<div class="t" style="left:8.86px;top:694.00px;font-size:20.5px;line-height:20.5px;color:#262626;">14</div>
<div class="t" style="left:8.96px;top:723.00px;font-size:20.5px;line-height:20.5px;color:#262626;">15</div>
<div class="t" style="left:9.02px;top:751.00px;font-size:20.5px;line-height:20.5px;color:#262626;">16</div>
<div class="t" style="left:9.07px;top:779.00px;font-size:20.5px;line-height:20.5px;color:#262626;">17</div>
<div class="t" style="left:8.96px;top:807.00px;font-size:20.5px;line-height:20.5px;color:#262626;">18</div>
<div class="t" style="left:9.02px;top:836.00px;font-size:20.5px;line-height:20.5px;color:#262626;">19</div>
<div class="t" style="left:9.22px;top:864.00px;font-size:20.5px;line-height:20.5px;color:#262626;">20</div>
<div class="t" style="left:9.32px;top:892.00px;font-size:20.5px;line-height:20.5px;color:#262626;">21</div>
<div class="t" style="left:111.26px;top:329.00px;font-size:18.5px;line-height:18.5px;color:#000;font-weight:bold;transform:scaleX(1.0292);">Họ và tên</div>
<div class="t" style="left:43.19px;top:357.00px;font-size:18.5px;line-height:18.5px;color:#000;transform:scaleX(1.0232);">Nguyễn Văn Nam</div>
<div class="t" style="left:44.23px;top:385.00px;font-size:18.5px;line-height:18.5px;color:#000;transform:scaleX(1.0195);">Trần Hoàng Nguyên Nhật</div>
<div class="t" style="left:43.22px;top:414.00px;font-size:18.5px;line-height:18.5px;color:#000;">Phạm Bá Thành</div>
<div class="t" style="left:44.23px;top:442.00px;font-size:18.5px;line-height:18.5px;color:#000;transform:scaleX(1.0270);">Trịnh Văn Nam</div>
<div class="t" style="left:43.25px;top:470.00px;font-size:18.5px;line-height:18.5px;color:#000;transform:scaleX(1.0492);">Hoàng Minh Mẫn</div>
<div class="t" style="left:44.23px;top:498.00px;font-size:18.5px;line-height:18.5px;color:#000;transform:scaleX(1.0161);">Trần Đô Linh</div>
<div class="t" style="left:43.30px;top:527.00px;font-size:18.5px;line-height:18.5px;color:#000;transform:scaleX(1.0164);">Nguyễn Ngọc Hân</div>
<div class="t" style="left:44.32px;top:555.00px;font-size:18.5px;line-height:18.5px;color:#000;transform:scaleX(1.0333);">Trần Bảo Nhi</div>
<div class="t" style="left:43.31px;top:583.00px;font-size:18.5px;line-height:18.5px;color:#000;transform:scaleX(1.0084);">Hoàng Văn Thắng</div>
<div class="t" style="left:44.34px;top:611.00px;font-size:18.5px;line-height:18.5px;color:#000;">Trịnh Thư Ý</div>
<div class="t" style="left:300.11px;top:329.00px;font-size:18.5px;line-height:18.5px;color:#000;font-weight:bold;transform:scaleX(1.0145);">Tên</div>
<div class="t" style="left:294.90px;top:357.00px;font-size:18.5px;line-height:18.5px;color:#000;transform:scaleX(1.0838);">Nam</div>
<div class="t" style="left:295.40px;top:385.00px;font-size:18.5px;line-height:18.5px;color:#000;transform:scaleX(1.0784);">Nhật</div>
<div class="t" style="left:289.94px;top:414.00px;font-size:18.5px;line-height:18.5px;color:#000;">Thành</div>
<div class="t" style="left:294.90px;top:442.00px;font-size:18.5px;line-height:18.5px;color:#000;transform:scaleX(1.0838);">Nam</div>
<div class="t" style="left:295.74px;top:470.00px;font-size:18.5px;line-height:18.5px;color:#000;transform:scaleX(1.1231);">Mẫn</div>
<div class="t" style="left:298.48px;top:498.00px;font-size:18.5px;line-height:18.5px;color:#000;transform:scaleX(1.0284);">Linh</div>
<div class="t" style="left:297.61px;top:527.00px;font-size:18.5px;line-height:18.5px;color:#000;transform:scaleX(1.0715);">Hân</div>
<div class="t" style="left:300.21px;top:555.00px;font-size:18.5px;line-height:18.5px;color:#000;transform:scaleX(1.1449);">Nhi</div>
<div class="t" style="left:291.74px;top:583.00px;font-size:18.5px;line-height:18.5px;color:#000;transform:scaleX(0.9925);">Thắng</div>
<div class="t" style="left:310.91px;top:611.00px;font-size:18.5px;line-height:18.5px;color:#000;transform:scaleX(0.8370);">Ý</div>
<div class="r" style="left:365.5px;top:380.7px;width:28.5px;height:29px;background:#fff;border:1px solid #d0d0d0;box-sizing:border-box"></div>
<svg class="r" style="left:366px;top:382px" width="27" height="26" viewBox="0 0 27 26"><rect x="2.9" y="2.4" width="20" height="18.5" fill="#fff" stroke="#9a9a9a" stroke-width="1.1"/><path d="M3 6.8h20M3 11.6h20M3 16.3h20M8.3 2.5v18.5M17.3 2.5v18.5" stroke="#cfcfcf" stroke-width="1"/><rect x="8.2" y="6.9" width="9.4" height="5" fill="#fff" stroke="#5fa98a" stroke-width="1.4"/><rect x="8.8" y="15" width="6.5" height="5.3" fill="#d9d9d9"/><path d="M19.5 9.6h4.8l-3 4.6h3.2l-8.3 8.4 2.6-6.3h-3z" fill="#f2bc62"/></svg>
<svg class="r" style="left:0px;top:0px" width="1500" height="900" viewBox="0 0 1500 900"><polygon points="1093.75,835.00 1166.25,835.00 1130.00,895.50 1124.17,886.25 1121.25,880.83" fill="#ed1c2a"/><polygon points="1143.30,845.00 1148.30,845.00 1124.17,886.25 1121.25,880.83" fill="#fff"/><polygon points="1105.00,835.00 1111.70,835.00 1123.75,857.10 1121.25,860.80" fill="#fff"/><polygon points="1122.90,835.00 1137.90,835.00 1130.00,845.80" fill="#fff"/><polygon points="1118.00,836.00 1122.90,835.00 1130.00,845.80 1125.00,855.00" fill="#d41f2a"/></svg>
<svg class="r" style="left:0px;top:0px" width="1500" height="900" viewBox="0 0 1500 900"><path d="M1166,861.2 V870.5 H1180.2 Q1184.2,870.5 1184.2,866.5 V860.5 Q1184.2,856.5 1180.2,856.5 H1164" fill="none" stroke="#ec1c2b" stroke-width="4.6"/><path d="M1189.8999999999999,872.8 L1199.2,855.7 L1206.9,872.8 M1193.6,863.8 H1201.7" fill="none" stroke="#ec1c2b" stroke-width="4.6"/><path d="M1217.5,856.5 H1227.1000000000001 Q1231.1000000000001,856.5 1231.1000000000001,860.5 V866.5 Q1231.1000000000001,870.5 1227.1000000000001,870.5 H1217.5 Q1213.5,870.5 1213.5,866.5 V860.5 Q1213.5,856.5 1217.5,856.5 Z" fill="none" stroke="#ec1c2b" stroke-width="4.6"/><path d="M1236,856.5 H1257.8 M1246.9,856.5 V872.8" fill="none" stroke="#ec1c2b" stroke-width="4.6"/><path d="M1257.5,872.8 L1267.2,855.7 L1275.3,872.8 M1261.2,863.8 H1269.7" fill="none" stroke="#ec1c2b" stroke-width="4.6"/><path d="M1283.7,856.5 H1294.8 Q1298.8,856.5 1298.8,860.5 V866.5 Q1298.8,870.5 1294.8,870.5 H1283.7 Q1279.7,870.5 1279.7,866.5 V860.5 Q1279.7,856.5 1283.7,856.5 Z" fill="none" stroke="#ec1c2b" stroke-width="4.6"/><path d="M1303.5,856.5 H1325.3 M1314.4,856.5 V872.8" fill="none" stroke="#ec1c2b" stroke-width="4.6"/><path d="M1329.45,854.2 V858.8000000000001 M1329.45,861.2 V872.8" fill="none" stroke="#ec1c2b" stroke-width="4.6"/><path d="M1336.3999999999999,872.8 V861.2 M1336.3999999999999,854.2 V858.8000000000001 M1338.6,854.7 L1350.7,872.3 M1353.4,854.2 V872.8" fill="none" stroke="#ec1c2b" stroke-width="4.6"/><path d="M1360.3,854.2 V872.8 M1377.8,854.2 V872.8 M1358,863.8 H1380.1" fill="none" stroke="#ec1c2b" stroke-width="4.6"/><path d="M1389.0,856.5 H1398.5 Q1402.5,856.5 1402.5,860.5 V866.5 Q1402.5,870.5 1398.5,870.5 H1389.0 Q1385.0,870.5 1385.0,866.5 V860.5 Q1385.0,856.5 1389.0,856.5 Z" fill="none" stroke="#ec1c2b" stroke-width="4.6"/><path d="M1429.7,856.5 H1413.7 Q1409.7,856.5 1409.7,860.5 V866.5 Q1409.7,870.5 1413.7,870.5 H1429.7" fill="none" stroke="#ec1c2b" stroke-width="4.6"/><rect x="1431.7" y="867.9" width="4.1" height="4.9" fill="#a8111f"/><path d="M1436.2,854.2 L1444.7,870.8 L1453.2,854.2" fill="none" stroke="#a8111f" stroke-width="4.6" stroke-linejoin="bevel"/><path d="M1459.7,872.8 V861.2 M1459.7,854.2 V858.8000000000001 M1461.9,854.7 L1474.8,872.3 M1477.5,854.2 V872.8" fill="none" stroke="#a8111f" stroke-width="4.6"/></svg>
<div class="r" style="left:0px;top:0px;width:1500px;height:4px;background:#000"></div>
<div class="r" style="left:0px;top:896px;width:1500px;height:4px;background:#000"></div>
<div class="r" style="left:0px;top:0px;width:4px;height:900px;background:#000"></div>
<div class="r" style="left:1496px;top:0px;width:4px;height:900px;background:#000"></div>
</body></html>
